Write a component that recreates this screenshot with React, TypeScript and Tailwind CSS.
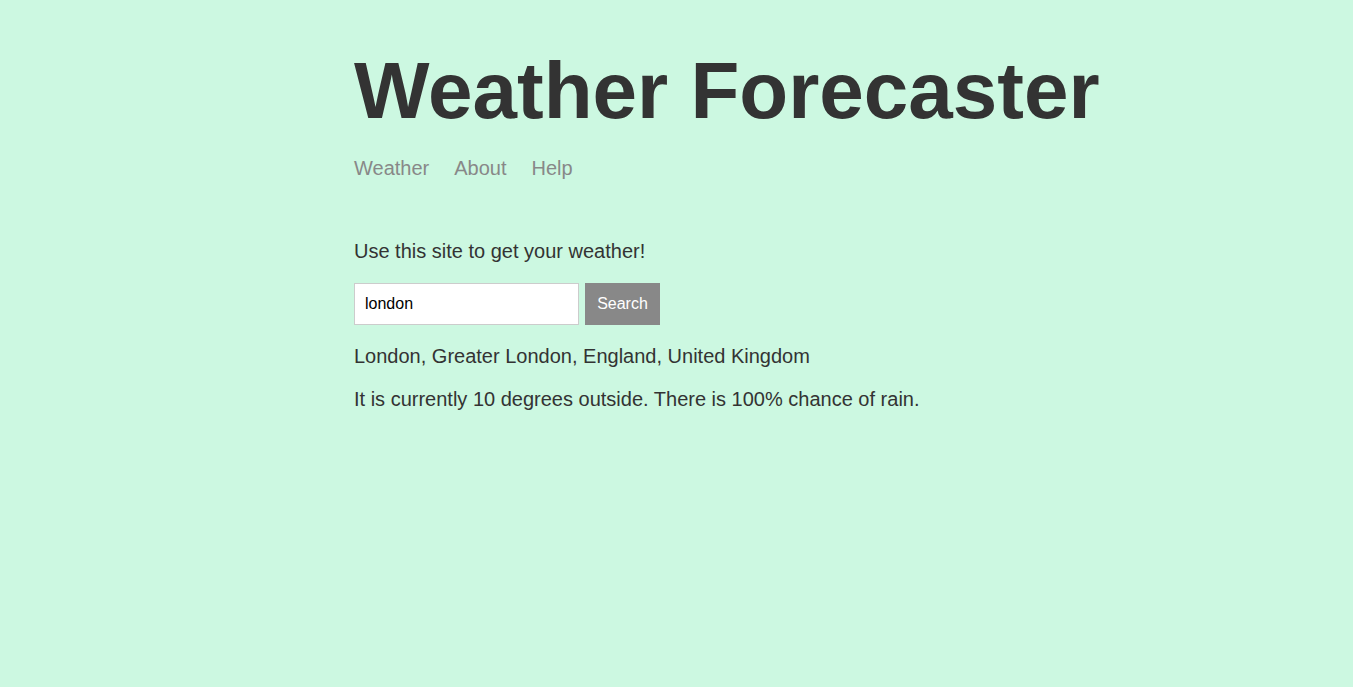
export default function App() {
  return (
    <div className="min-h-[687px] bg-[#ccf8e1] text-[#333333] font-['Liberation_Sans',Arial,sans-serif]">
      <div className="mx-auto w-[645px] pt-[51px]">
        <header>
          <h1 className="whitespace-nowrap text-[80px] font-bold leading-[80px]">Weather Forecaster</h1>
          <nav className="mt-[23px] flex gap-[25px] text-[20px] leading-[28px] text-[#888888]">
            <a href="#">Weather</a>
            <a href="#">About</a>
            <a href="#">Help</a>
          </nav>
        </header>

        <main className="mt-[55px]">
          <p className="text-[20px] leading-[28px]">Use this site to get your weather!</p>
          <form className="mt-[18px] flex gap-[6px]" onSubmit={(e) => e.preventDefault()}>
            <input
              defaultValue="london"
              className="h-[42px] w-[225px] border border-[#cccccc] bg-white px-[10px] text-[16px] text-black outline-none"
            />
            <button className="h-[42px] w-[75px] border border-[#888888] bg-[#888888] text-[16px] text-white">
              Search
            </button>
          </form>
          <p className="mt-[17px] text-[20px] leading-[28px]">London, Greater London, England, United Kingdom</p>
          <p className="mt-[15px] text-[20px] leading-[28px]">
            It is currently 10 degrees outside. There is 100% chance of rain.
          </p>
        </main>
      </div>
    </div>
  );
}
